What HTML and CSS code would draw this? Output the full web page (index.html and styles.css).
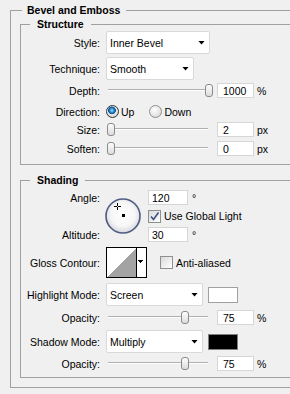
FILE: index.html
```html
<!DOCTYPE html>
<html lang="en">
<head>
  <meta charset="UTF-8" />
  <meta name="viewport" content="width=device-width, initial-scale=1.0"/>
  <title>Bevel and Emboss</title>
  <link rel="stylesheet" href="styles.css">
</head>
<body>
  <fieldset class="panel">
    <legend>Bevel and Emboss</legend>

    <fieldset class="group">
      <legend>Structure</legend>
      <div class="row tall r-style">
        <span class="label">Style:</span>
        <div class="select w-style">Inner Bevel<i class="arrow"></i></div>
      </div>
      <div class="row tall r-technique">
        <span class="label">Technique:</span>
        <div class="select w-technique">Smooth<i class="arrow"></i></div>
      </div>
      <div class="row r-depth">
        <span class="label">Depth:</span>
        <div class="slider"><i class="thumb" style="--v:100"></i></div>
        <input class="num" value="1000">
        <span class="unit">%</span>
      </div>
      <div class="row r-direction">
        <span class="label">Direction:</span>
        <label class="radio on"><i></i>Up</label>
        <label class="radio"><i></i>Down</label>
      </div>
      <div class="row r-size">
        <span class="label">Size:</span>
        <div class="slider"><i class="thumb" style="--v:0"></i></div>
        <input class="num" value="2">
        <span class="unit">px</span>
      </div>
      <div class="row r-soften">
        <span class="label">Soften:</span>
        <div class="slider"><i class="thumb" style="--v:0"></i></div>
        <input class="num" value="0">
        <span class="unit">px</span>
      </div>
    </fieldset>

    <fieldset class="group shading">
      <legend>Shading</legend>
      <div class="angle">
        <span class="label a-angle">Angle:</span>
        <svg class="dial" width="36" height="36" viewBox="0 0 36 36">
          <defs>
            <radialGradient id="dialFill" cx="50%" cy="45%" r="55%">
              <stop offset="0" stop-color="#ffffff"/>
              <stop offset="0.65" stop-color="#f6f6f6"/>
              <stop offset="1" stop-color="#d6d7dc"/>
            </radialGradient>
          </defs>
          <circle cx="18" cy="18" r="17" fill="url(#dialFill)" stroke="#4f5a82" stroke-width="1.6"/>
          <path d="M9 8.5h3M13 8.5h3M12.5 5v3M12.5 9v3" stroke="#000" stroke-width="1"/>
          <rect x="17" y="16" width="3" height="3" fill="#000"/>
        </svg>
        <div class="ctl a-angle-val">
          <input class="num wide" value="120">
          <span class="deg">°</span>
        </div>
        <label class="check on a-global"><i><svg width="11" height="11" viewBox="0 0 11 11"><path d="M2 5.5l2.5 3L9.5 1.5" fill="none" stroke="#3d4f80" stroke-width="1.6"/></svg></i>Use Global Light</label>
        <span class="label a-alt">Altitude:</span>
        <div class="ctl a-alt-val">
          <input class="num wide" value="30">
          <span class="deg">°</span>
        </div>
      </div>

      <div class="row r-gloss">
        <span class="label">Gloss Contour:</span>
        <svg class="contour" width="41" height="31" viewBox="0 0 41 31" shape-rendering="crispEdges">
          <rect x="0.5" y="0.5" width="40" height="30" fill="#fff" stroke="#000"/>
          <polygon points="1,30 30,1 30,30" fill="#a3a3a3"/>
          <path d="M30.5 1v29" stroke="#000"/>
          <polygon points="32,13 37,13 34.5,16" fill="#000"/>
        </svg>
        <label class="check aa"><i></i>Anti-aliased</label>
      </div>

      <div class="row tall r-highlight">
        <span class="label">Highlight Mode:</span>
        <div class="select w-mode">Screen<i class="arrow"></i></div>
        <span class="swatch white"></span>
      </div>
      <div class="row r-op1">
        <span class="label">Opacity:</span>
        <div class="slider"><i class="thumb" style="--v:75"></i></div>
        <input class="num" value="75">
        <span class="unit">%</span>
      </div>
      <div class="row tall r-shadow">
        <span class="label">Shadow Mode:</span>
        <div class="select w-mode">Multiply<i class="arrow"></i></div>
        <span class="swatch black"></span>
      </div>
      <div class="row r-op2">
        <span class="label">Opacity:</span>
        <div class="slider"><i class="thumb" style="--v:75"></i></div>
        <input class="num" value="75">
        <span class="unit">%</span>
      </div>
    </fieldset>
  </fieldset>
</body>
</html>
```

FILE: styles.css
```css
html, body { margin: 0; overflow: hidden; }
body { background: #f0f0f0; font-family: "Liberation Sans", Arial, sans-serif; font-size: 10.5px; color: #000; padding-top: 4px; }

fieldset { border: 1px solid #a0a0a0; margin: 0; min-width: 0; }
legend { font-weight: bold; line-height: 13px; }

.panel { width: 320px; margin-left: 10px; padding: 1px 0 9px 9px; }
.panel > legend { padding: 0 6px 0 5px; margin-left: 2px; }
.group { padding: 0 0 8px 0; }
.group > legend { padding: 0 7px; margin-left: 9px; }
.shading { margin-top: 9px; padding-bottom: 6px; }

.row { display: flex; align-items: center; height: 15px; margin-top: 3px; }
.row.tall { height: 23px; }
.label { flex: none; width: 79px; margin-right: 6px; text-align: right; white-space: nowrap; }

.r-style { margin-top: 0; }
.r-direction { margin-top: 6px; }
.r-soften { margin-top: 4px; }
.r-gloss { height: 31px; margin-top: 5px; }
.r-highlight { margin-top: 5px; }
.r-op1 { margin-top: 4px; }
.r-shadow { margin-top: 5px; }
.r-op2 { margin-top: 3px; }

.select { display: flex; align-items: center; justify-content: space-between; box-sizing: border-box; height: 23px; padding: 0 4px 0 3px; background: #fff; border: 1px solid #d9d9d9; border-radius: 2px; }
.select .arrow { width: 7px; height: 4px; background: #000; clip-path: polygon(0 0, 100% 0, 50% 100%); }
.w-style { width: 104px; }
.w-technique { width: 88px; }
.w-mode { width: 97px; }

.slider { position: relative; flex: none; width: 107px; height: 15px; }
.slider::before { content: ""; position: absolute; left: 2px; right: 5px; top: 6px; height: 1px; background: #b0b0b0; border-bottom: 1px solid #fff; }
.thumb { position: absolute; top: 1px; left: calc(1px + (100% - 9px) * var(--v) / 100); box-sizing: border-box; width: 8px; height: 13px; border: 1px solid #8a8a8a; border-radius: 3px; background: linear-gradient(#fdfdfd, #dcdcdc); }

.num { box-sizing: border-box; width: 37px; height: 15px; margin: 0 0 0 4px; padding: 0 0 0 5px; font: inherit; color: #000; background: #fff; border: 1px solid #d6d6d6; outline: none; }
.num.wide { width: 40px; margin-left: 0; padding-left: 3px; }
.unit { margin-left: 3px; }
.deg { margin-left: 4px; }

.radio { display: flex; align-items: center; gap: 2px; }
.radio + .radio { margin-left: 15px; }
.radio i { box-sizing: border-box; width: 13px; height: 13px; border: 1px solid #8e8f8f; border-radius: 50%; background: radial-gradient(circle at 40% 35%, #ffffff, #d2d2d2); }
.radio.on i { border-color: #2f3133; background: radial-gradient(circle at 45% 40%, #a8dcf8 0, #2b8fd0 2px, #0d4f8c 3.6px, #f2f2f2 4.2px, #d8d8d8 6px); }

.check { display: flex; align-items: center; gap: 3px; }
.check i { display: flex; align-items: center; justify-content: center; box-sizing: border-box; width: 13px; height: 13px; border: 1px solid #8e8f8f; background: linear-gradient(135deg, #dadada, #ffffff); }
.check.aa { margin-left: 13px; }

.angle { display: grid; grid-template-columns: 85px 42px auto; grid-template-rows: 15px 12px 15px; row-gap: 5px; margin-top: 3px; }
.angle .label { align-self: center; }
.a-angle { grid-column: 1; grid-row: 1; }
.a-alt { grid-column: 1; grid-row: 3; }
.dial { grid-column: 2; grid-row: 1 / 4; align-self: center; margin-left: -1px; }
.ctl { display: flex; align-items: center; grid-column: 3; }
.a-angle-val { grid-row: 1; }
.a-global { grid-column: 3; grid-row: 2; }
.a-alt-val { grid-row: 3; }

.contour { flex: none; }

.swatch { box-sizing: border-box; width: 30px; height: 16px; margin-left: 5px; border: 1px solid #a0a0a0; }
.swatch.white { background: #fff; }
.swatch.black { background: #000; border-color: #808080; }
```
